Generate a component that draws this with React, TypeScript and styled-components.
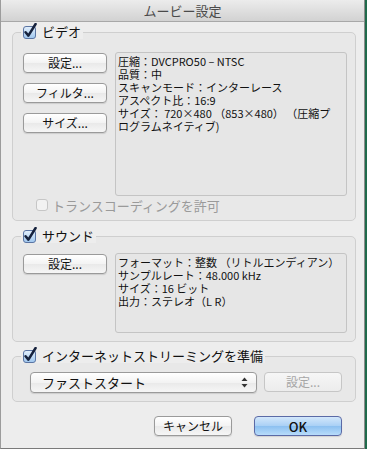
import styled, { createGlobalStyle } from 'styled-components'

const Global = createGlobalStyle`
  html, body {
    margin: 0;
    padding: 0;
    background: #1f6a4b;
  }
  body {
    font-family: "Noto Sans CJK JP", "Liberation Sans", sans-serif;
    color: #111;
  }
`

const Window = styled.div`
  width: 365px;
  height: 449px;
  box-sizing: border-box;
  background: #ededed;
  border-left: 1px solid #9c9c9c;
  border-right: 1px solid #8c8c8c;
  border-bottom: 1px solid #7a7a7a;
  display: flex;
  flex-direction: column;
`

const TitleBar = styled.div`
  height: 22px;
  box-sizing: border-box;
  background: linear-gradient(#ececec, #d2d2d2);
  border-bottom: 1px solid #a8a8a8;
  border-radius: 4px 4px 0 0;
  display: flex;
  align-items: center;
  justify-content: center;
  font-size: 13px;
  color: #4a4a4a;
  line-height: 1;
`

const Content = styled.div`
  padding: 3px 8px 0 11px;
  display: flex;
  flex-direction: column;
`

const Group = styled.fieldset<{ $top?: number; $pb?: number; $pt?: number }>`
  margin: ${p => p.$top ?? 0}px 0 0 0;
  padding: ${p => p.$pt ?? 13}px 7px ${p => p.$pb ?? 8}px 10px;
  border: 1px solid #cfcfcf;
  border-radius: 5px;
  background: #e8e8e8;
  min-width: 0;
`

const Legend = styled.legend`
  margin-left: -2px;
  padding: 0 2px;
  height: 14px;
  display: flex;
  align-items: center;
  gap: 5px;
  font-size: 13px;
  line-height: 14px;
  background: #ededed;
`

const Row = styled.div`
  display: flex;
  gap: 8px;
  align-items: flex-start;
`

const ButtonColumn = styled.div`
  display: flex;
  flex-direction: column;
  gap: 10px;
  margin-top: 1px;
`

const PushButton = styled.button<{ $w?: number; $primary?: boolean }>`
  width: ${p => p.$w ?? 84}px;
  height: 20px;
  padding: 0;
  box-sizing: border-box;
  border: 1px solid ${p => (p.$primary ? '#5b6aa6' : '#9a9a9a')};
  border-radius: 4px;
  background: ${p =>
    p.$primary
      ? 'linear-gradient(#d3e7fb, #a9d0f5 50%, #8cc0f0 51%, #b8dcfb)'
      : 'linear-gradient(#ffffff, #f3f3f3 50%, #e9e9e9 51%, #f6f6f6)'};
  box-shadow: 0 1px 1px rgba(0, 0, 0, 0.12);
  font-family: "Noto Sans CJK JP", "Liberation Sans", sans-serif;
  font-size: ${p => (p.$primary ? 13 : 12)}px;
  font-weight: ${p => (p.$primary ? 500 : 400)};
  color: #111;
  line-height: 1;
  display: flex;
  align-items: center;
  justify-content: center;

  &:disabled {
    border-color: #c6c6c6;
    background: linear-gradient(#f6f6f6, #ececec);
    color: #a6a6a6;
    box-shadow: none;
  }
`

const InfoBox = styled.div<{ $h: number }>`
  width: 232px;
  height: ${p => p.$h}px;
  box-sizing: border-box;
  border: 1px solid #c4c4c4;
  border-radius: 3px;
  background: #e6e6e6;
  padding: 2px 2px;
  font-size: 11px;
  line-height: 13px;
  color: #111;
`

const Line = styled.div`
  white-space: nowrap;
  height: 13px;
  overflow: visible;
`

const OptionRow = styled.div`
  display: flex;
  align-items: center;
  gap: 4px;
  margin: 2px 0 0 13px;
  height: 14px;
  font-size: 13px;
  color: #9a9a9a;
`

const EmptyBox = styled.span`
  width: 12px;
  height: 12px;
  box-sizing: border-box;
  border: 1px solid #c6c6c6;
  border-radius: 3px;
  background: #f2f2f2;
`

const StreamRow = styled.div`
  display: flex;
  gap: 7px;
  padding-left: 7px;
`

const Popup = styled.div`
  width: 227px;
  height: 21px;
  box-sizing: border-box;
  border: 1px solid #9a9a9a;
  border-radius: 4px;
  background: linear-gradient(#ffffff, #f3f3f3 50%, #e9e9e9 51%, #f6f6f6);
  box-shadow: 0 1px 1px rgba(0, 0, 0, 0.12);
  display: flex;
  align-items: center;
  justify-content: space-between;
  padding: 0 8px 0 11px;
  font-size: 13px;
  color: #111;
`

const Footer = styled.div`
  display: flex;
  justify-content: flex-end;
  gap: 22px;
  margin: 14px 14px 0 0;
`

function Check() {
  return (
    <svg width="14" height="16" viewBox="0 0 14 16" style={{ marginTop: -3 }}>
      <defs>
        <linearGradient id="cb" x1="0" y1="0" x2="0" y2="1">
          <stop offset="0" stopColor="#e4f0fc" />
          <stop offset="1" stopColor="#9ec6ee" />
        </linearGradient>
      </defs>
      <rect x="0.5" y="3.5" width="12" height="12" rx="2.5" fill="url(#cb)" stroke="#5b75a3" />
      <path d="M2.6 9.2 L5.4 12.6 L12.6 1" fill="none" stroke="#16223d" strokeWidth="2.5" strokeLinecap="round" strokeLinejoin="round" />
    </svg>
  )
}

function Arrows() {
  return (
    <svg width="7" height="11" viewBox="0 0 7 11">
      <path d="M0.5 4 L3.5 0.5 L6.5 4 Z" fill="#333" />
      <path d="M0.5 7 L3.5 10.5 L6.5 7 Z" fill="#333" />
    </svg>
  )
}

export default function App() {
  return (
    <Window>
      <Global />
      <TitleBar>ムービー設定</TitleBar>
      <Content>
        <Group>
          <Legend>
            <Check />
            ビデオ
          </Legend>
          <Row>
            <ButtonColumn>
              <PushButton>設定...</PushButton>
              <PushButton>フィルタ...</PushButton>
              <PushButton>サイズ...</PushButton>
            </ButtonColumn>
            <InfoBox $h={144}>
              <Line>圧縮：DVCPRO50 – NTSC</Line>
              <Line>品質：中</Line>
              <Line>スキャンモード：インターレース</Line>
              <Line>アスペクト比：16:9</Line>
              <Line>サイズ： 720×480 （853×480） （圧縮プ</Line>
              <Line>ログラムネイティブ)</Line>
            </InfoBox>
          </Row>
          <OptionRow>
            <EmptyBox />
            トランスコーディングを許可
          </OptionRow>
        </Group>

        <Group $top={8} $pt={10}>
          <Legend>
            <Check />
            サウンド
          </Legend>
          <Row>
            <ButtonColumn>
              <PushButton>設定...</PushButton>
            </ButtonColumn>
            <InfoBox $h={80}>
              <Line>フォーマット：整数 （リトルエンディアン）</Line>
              <Line>サンプルレート：48.000 kHz</Line>
              <Line>サイズ：16 ビット</Line>
              <Line>出力：ステレオ（L R）</Line>
            </InfoBox>
          </Row>
        </Group>

        <Group $top={7} $pt={9}>
          <Legend>
            <Check />
            インターネットストリーミングを準備
          </Legend>
          <StreamRow>
            <Popup>
              ファストスタート
              <Arrows />
            </Popup>
            <PushButton $w={78} disabled>
              設定...
            </PushButton>
          </StreamRow>
        </Group>

        <Footer>
          <PushButton $w={78}>キャンセル</PushButton>
          <PushButton $w={88} $primary>
            OK
          </PushButton>
        </Footer>
      </Content>
    </Window>
  )
}
